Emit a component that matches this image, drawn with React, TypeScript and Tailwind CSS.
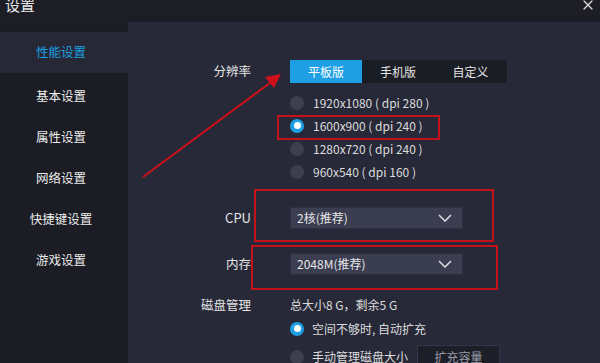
import { X } from 'lucide-react';

const menu = ['基本设置', '属性设置', '网络设置', '快捷键设置', '游戏设置'];

const resolutions = [
  { label: '1920x1080 ( dpi 280 )', checked: false },
  { label: '1600x900 ( dpi 240 )', checked: true },
  { label: '1280x720 ( dpi 240 )', checked: false },
  { label: '960x540 ( dpi 160 )', checked: false },
];

function Radio({ checked }: { checked: boolean }) {
  if (checked) {
    return (
      <span className="w-[14px] h-[14px] rounded-full bg-[#1e9fe4] flex items-center justify-center shrink-0">
        <span className="w-[7px] h-[7px] rounded-full bg-white" />
      </span>
    );
  }
  return <span className="w-[14px] h-[14px] rounded-full bg-[#3d3f4e] shrink-0" />;
}

function Select({ value }: { value: string }) {
  return (
    <div className="w-[173px] h-[22px] bg-[#3b3d50] border border-[#2e3040] flex items-center justify-between pl-[6px] pr-[10px] text-[12px] text-[#e6e6e6]">
      <span>{value}</span>
      {/* wide thin chevron */}
      <svg width="14" height="8" viewBox="0 0 14 8" className="text-[#d8d8d8]">
        <polyline points="1,1 7,7 13,1" fill="none" stroke="currentColor" strokeWidth="1.6" />
      </svg>
    </div>
  );
}

export default function App() {
  return (
    <div
      className="relative w-[600px] h-[363px] overflow-hidden flex flex-col bg-[#272938] text-[#e4e4e4]"
      style={{ fontFamily: '"Noto Sans CJK SC", "Noto Sans", sans-serif' }}
    >
      {/* Title bar */}
      <div className="h-[22px] bg-[#1c1d25] flex items-start justify-between shrink-0">
        <span className="text-[15px] leading-[15px] -mt-[3px] ml-[5px] text-[#e8e8e8]">设置</span>
        <X size={16} strokeWidth={2} className="mr-[4px] -mt-[3px] text-[#d8d8d8]" />
      </div>

      <div className="flex flex-1 min-h-0">
        {/* Sidebar */}
        <div className="w-[128px] bg-[#1b1c24] pt-[10px] shrink-0">
          <div className="h-[41px] mb-[3px] bg-[#262836] flex items-center justify-center pr-[6px] text-[12.5px] text-[#1c9fe0]">
            性能设置
          </div>
          {menu.map((m) => (
            <div key={m} className="h-[41px] flex items-center justify-center pr-[6px] text-[12.5px] text-[#ececec]">
              {m}
            </div>
          ))}
        </div>

        {/* Main panel */}
        <div className="relative flex-1 flex flex-col pt-[38px] text-[12px]">
          <div className="flex items-center h-[23px]">
            <span className="w-[123px] text-right text-[12.5px]">分辨率</span>
            <div className="ml-[39px] flex bg-[#1b1d25] h-[23px]">
              <div className="w-[72px] bg-[#1e9fe4] text-white flex items-center justify-center">平板版</div>
              <div className="w-[72px] flex items-center justify-center">手机版</div>
              <div className="w-[73px] flex items-center justify-center">自定义</div>
            </div>
          </div>

          <div className="mt-[8px] ml-[162px] flex flex-col">
            {resolutions.map((r) => (
              <div key={r.label} className="h-[23px] flex items-center gap-[9px]">
                <Radio checked={r.checked} />
                <span className="text-[#dcdcdc]">{r.label}</span>
              </div>
            ))}
          </div>

          <div className="mt-[24px] flex items-center">
            <span className="w-[123px] text-right text-[13px]">CPU</span>
            <div className="ml-[39px]">
              <Select value="2核(推荐)" />
            </div>
          </div>

          <div className="mt-[24px] flex items-center">
            <span className="w-[123px] text-right text-[12.5px]">内存</span>
            <div className="ml-[39px]">
              <Select value="2048M(推荐)" />
            </div>
          </div>

          <div className="mt-[21px] h-[20px] flex items-center">
            <span className="w-[123px] text-right text-[12.5px]">磁盘管理</span>
            <span className="ml-[39px] text-[#dcdcdc]">总大小8 G，剩余5 G</span>
          </div>

          <div className="mt-[5px] ml-[162px] h-[24px] flex items-center gap-[8px]">
            <Radio checked />
            <span className="text-[#dcdcdc]">空间不够时, 自动扩充</span>
          </div>

          <div className="mt-[7px] ml-[162px] h-[24px] flex items-center">
            <Radio checked={false} />
            <span className="ml-[8px] text-[#dcdcdc]">手动管理磁盘大小</span>
            <div className="ml-[9px] w-[83px] h-[24px] bg-[#1d1f28] border border-[#33354a] flex items-center justify-center text-[#9a9ca8]">
              扩充容量
            </div>
          </div>

          {/* annotation boxes */}
          <div className="absolute left-[149px] top-[93px] w-[163px] h-[25px] border-2 border-[#c3121c]" />
          <div className="absolute left-[126px] top-[167px] w-[240px] h-[53px] border-2 border-[#c3121c]" />
          <div className="absolute left-[123px] top-[223px] w-[247px] h-[45px] border-2 border-[#c3121c]" />
        </div>
      </div>

      {/* annotation arrow */}
      <svg className="absolute left-0 top-0 pointer-events-none" width="600" height="363">
        <line x1="143" y1="177" x2="270" y2="83" stroke="#cf1019" strokeWidth="2" />
        <polygon points="281,74 274,88 265,77" fill="#cf1019" />
      </svg>
    </div>
  );
}
